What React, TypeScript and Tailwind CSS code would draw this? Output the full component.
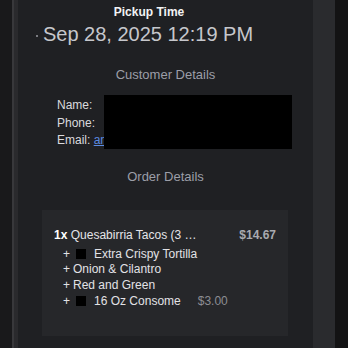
import React from "react";

const modifiers = [
  { redacted: true, label: "Extra Crispy Tortilla" },
  { redacted: false, label: "Onion & Cilantro" },
  { redacted: false, label: "Red and Green" },
  { redacted: true, label: "16 Oz Consome", price: "$3.00" },
];

const App = () => {
  return (
    <div
      className="w-[348px] h-[348px] overflow-hidden flex bg-[#161618]"
      style={{ fontFamily: '"Liberation Sans", Arial, sans-serif' }}
    >
      {/* left chrome */}
      <div className="w-[12px] bg-[#19191b]" />
      <div className="w-[2px] bg-[#38383b]" />
      <div className="w-[4px] bg-[#2a2a2d]" />

      <main className="w-[295px] shrink-0 bg-[#1f2023] flex flex-col pt-[4px]">
        <p className="pr-[33px] text-center text-[12px] leading-4 font-bold text-[#f2f2f4]">
          Pickup Time
        </p>
        <div className="pr-[42px] mt-[2px] flex justify-center items-center gap-[5px]">
          <span className="w-[2px] h-[2px] rounded-full bg-[#9a9aa0] mt-[4px]" />
          <span className="text-[20px] leading-6 font-light text-[#c6c7cc]">
            Sep 28, 2025 12:19 PM
          </span>
        </div>

        <h2 className="mt-[21px] text-center text-[13px] leading-4 text-[#9c9ea8]">
          Customer Details
        </h2>
        <div className="relative mt-[14px] pl-[39px] text-[12px] leading-[17.5px] text-[#dadade]">
          <p>Name:</p>
          <p>Phone:</p>
          <p>
            Email:{" "}
            <a className="underline text-[#5b8ae0]" href="#">
              an
            </a>
          </p>
          <div className="absolute left-[86px] top-[-2px] w-[188px] h-[54px] bg-black" />
        </div>

        <h2 className="mt-[19px] text-center text-[13px] leading-4 text-[#9c9ea8]">
          Order Details
        </h2>

        <section className="mt-[25px] ml-[24px] w-[246px] bg-[#26272a] px-[12px] pt-[17px] pb-[27px] text-[12px]">
          <div className="flex justify-between leading-4">
            <p className="text-[#e4e4e8]">
              <span className="font-bold text-white">1x</span> Quesabirria Tacos (3 …
            </p>
            <span className="font-bold text-[#a9aab0]">$14.67</span>
          </div>
          <ul className="mt-[4px] pl-[9px] text-[#e2e2e6] leading-[15.7px]">
            {modifiers.map((m) => (
              <li key={m.label} className="flex items-center">
                <span>+</span>
                {m.redacted ? (
                  <span className="ml-[6px] mr-[8px] w-[10px] h-[10px] bg-black" />
                ) : (
                  <span className="w-[3px]" />
                )}
                <span>{m.label}</span>
                {m.price && <span className="ml-[17px] text-[#8c8d93]">{m.price}</span>}
              </li>
            ))}
          </ul>
        </section>
      </main>

      {/* right chrome */}
      <div className="w-[22px] bg-[#2a2b2e]" />
      <div className="flex-1 bg-[#131314]" />
    </div>
  );
};

export default App;
